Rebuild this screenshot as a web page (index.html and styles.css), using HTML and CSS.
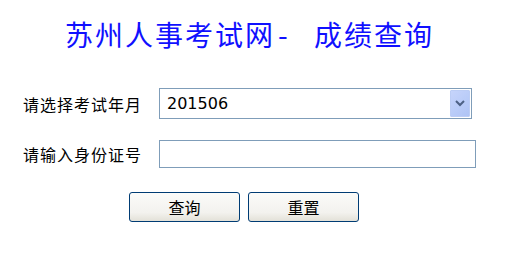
FILE: index.html
```html
<!DOCTYPE html>
<html lang="zh-CN">
<head>
<meta charset="utf-8">
<title>苏州人事考试网- 成绩查询</title>
<link rel="stylesheet" href="styles.css">
</head>
<body>
<div class="page">
  <h1 class="title">苏州人事考试网<span class="dash">-</span> 成绩查询</h1>
  <div class="form">
    <label class="label">请选择考试年月</label>
    <div class="select">
      <span class="select-value">201506</span>
      <span class="select-btn">
        <svg width="10" height="7" viewBox="0 0 10 7"><path d="M1 1 L5 5 L9 1" fill="none" stroke="#4d6185" stroke-width="2"/></svg>
      </span>
    </div>
    <label class="label">请输入身份证号</label>
    <input class="text-input" type="text">
  </div>
  <div class="actions">
    <button class="btn" type="button">查询</button>
    <button class="btn" type="button">重置</button>
  </div>
</div>
</body>
</html>
```
FILE: styles.css
```css
html, body {
  margin: 0;
  padding: 0;
  background: #ffffff;
}
body {
  font-family: "Noto Sans CJK SC", "DejaVu Sans", sans-serif;
  color: #000;
}
.page {
  width: 518px;
  height: 264px;
}
.title {
  margin: 0;
  padding: 16px 0 0 65px;
  height: 38px;
  line-height: 36px;
  font-size: 28px;
  font-weight: normal;
  letter-spacing: 2px;
  word-spacing: 14px;
  color: #1010ff;
  white-space: pre;
}
.dash {
  margin-left: 3px;
  margin-right: 2px;
}
.form {
  margin-top: 34px;
  padding-left: 23px;
  display: grid;
  grid-template-columns: 136px auto;
  row-gap: 21px;
  align-items: center;
}
.label {
  font-size: 16px;
  letter-spacing: 1px;
  line-height: 20px;
}
.select {
  box-sizing: border-box;
  width: 313px;
  height: 31px;
  border: 1px solid #7f9db9;
  padding: 1px 1px 1px 7px;
  display: flex;
  align-items: center;
  justify-content: space-between;
}
.select-value {
  font-family: "DejaVu Sans", sans-serif;
  font-size: 16px;
}
.select-btn {
  box-sizing: border-box;
  width: 20px;
  height: 27px;
  border-radius: 1px;
  background: linear-gradient(135deg, #c6d4fb 0%, #b8cbf8 60%, #aec3f5 100%);
  border: 1px solid #bccdf5;
  display: flex;
  align-items: center;
  justify-content: center;
}
.text-input {
  box-sizing: border-box;
  width: 317px;
  height: 28px;
  margin: 0;
  border: 1px solid #7f9db9;
  padding: 0 4px;
  outline: none;
}
.actions {
  margin-top: 24px;
  padding-left: 129px;
  display: flex;
  gap: 8px;
}
.btn {
  box-sizing: border-box;
  width: 111px;
  height: 30px;
  margin: 0;
  padding: 0;
  border: 1px solid #003c74;
  border-radius: 3px;
  background: linear-gradient(180deg, #fbfbf9 0%, #f3f2ee 70%, #e3e1d8 100%);
  font-family: "Noto Sans CJK SC", sans-serif;
  font-size: 16px;
  color: #000;
  line-height: 20px;
}
```
